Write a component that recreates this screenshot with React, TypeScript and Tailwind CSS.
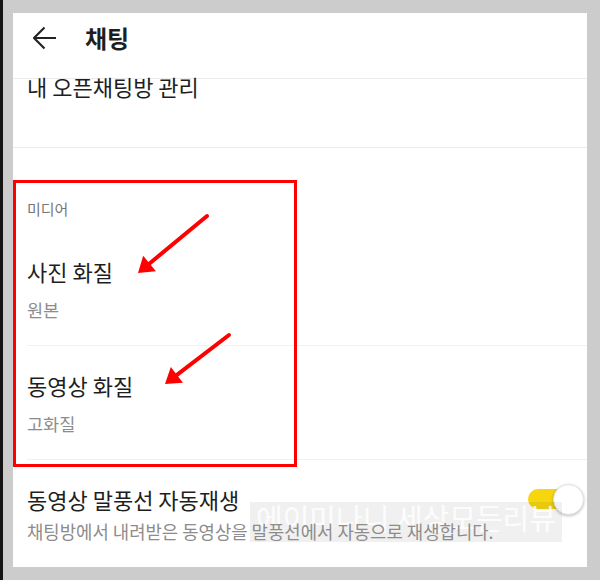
import React from "react";

// --- Annotation arrow (red, drawn over the screenshot) ---
type Pt = [number, number];

function arrowParts(tail: Pt, tip: Pt, head = 15, half = 10) {
  const dx = tip[0] - tail[0];
  const dy = tip[1] - tail[1];
  const len = Math.hypot(dx, dy);
  const ux = dx / len;
  const uy = dy / len;
  const bx = tip[0] - ux * head;
  const by = tip[1] - uy * head;
  const px = -uy;
  const py = ux;
  const poly = `${tip[0]},${tip[1]} ${bx + px * half},${by + py * half} ${bx - px * half},${by - py * half}`;
  return { bx: bx + ux * 2, by: by + uy * 2, poly };
}

function Arrow({ tail, tip }: { tail: Pt; tip: Pt }) {
  const a = arrowParts(tail, tip);
  return (
    <g>
      <line x1={tail[0]} y1={tail[1]} x2={a.bx} y2={a.by} stroke="#ff0000" strokeWidth={4} strokeLinecap="round" />
      <polygon points={a.poly} fill="#ff0000" />
    </g>
  );
}

function Toggle() {
  return (
    <div className="relative w-[56px] h-[31px] shrink-0">
      <div className="absolute left-0 top-[5px] w-[46px] h-[20px] rounded-full bg-[#f6d60f]" />
      <div className="absolute right-0 top-0 w-[31px] h-[31px] rounded-full bg-white border border-[#e2e2e2] shadow-[0_1px_3px_rgba(0,0,0,0.25)]" />
    </div>
  );
}

interface QualityItem {
  title: string;
  value: string;
}

const ITEMS: QualityItem[] = [
  { title: "사진 화질", value: "원본" },
  { title: "동영상 화질", value: "고화질" },
];

export default function App() {
  return (
    <div className="relative w-[600px] h-[580px] overflow-hidden bg-[#cccccc] font-['Noto_Sans_CJK_KR','Noto_Sans',sans-serif] flex">
      <div className="w-[3px] h-full bg-[#141414]" />

      <div className="ml-[10px] mt-[13px] w-[574px] h-[554px] bg-white flex flex-col">
        {/* header */}
        <div className="h-[66px] border-b border-[#ececec] shrink-0">
          <div className="h-[50px] flex items-center pl-[20px]">
            <svg width="24" height="24" viewBox="0 0 24 24" className="shrink-0">
              <path d="M23 12H1.5M11.5 1.5L1 12l10.5 10.5" fill="none" stroke="#222" strokeWidth={2.1} />
            </svg>
            <span className="ml-[28px] text-[24px] leading-[28px] font-bold text-[#1e1e1e]">채팅</span>
          </div>
        </div>

        {/* open chat row (scrolled under header) */}
        <div className="h-[69px] border-b border-[#ececec] px-[14px] shrink-0">
          <div className="-mt-[5px] text-[22px] leading-[24px] text-[#1e1e1e]">내 오픈채팅방 관리</div>
        </div>

        {/* media section */}
        <div className="pt-[51px] text-[15px] leading-[20px] text-[#777777] px-[14px]">미디어</div>
        <div className="h-[13px]" />
        {ITEMS.map((it) => (
          <div key={it.title} className="ml-[14px] border-b border-[#f1f1f1] pt-[25px] pb-[24px]">
            <div className="text-[22px] leading-[28px] text-[#1e1e1e]">{it.title}</div>
            <div className="mt-[14px] text-[17.5px] leading-[22px] text-[#8c8c8c]">{it.value}</div>
          </div>
        ))}

        {/* autoplay */}
        <div className="pl-[14px] pr-[3px] pt-[25px] flex items-start justify-between">
          <div>
            <div className="text-[22px] leading-[28px] text-[#1e1e1e]">동영상 말풍선 자동재생</div>
            <div className="relative z-10 mt-[7px] text-[17.8px] leading-[22px] text-[#8c8c8c] whitespace-nowrap">
              채팅방에서 내려받은 동영상을 말풍선에서 자동으로 재생합니다.
            </div>
          </div>
          <div className="-mt-[1px]">
            <Toggle />
          </div>
        </div>
      </div>

      {/* watermark */}
      <div className="absolute left-[250px] top-[502px] w-[312px] h-[40px] bg-black/[0.06] flex justify-center">
        <span className="-mt-[5px] text-[29px] leading-[40px] text-white/80 whitespace-nowrap">에이미나니 세상모든리뷰</span>
      </div>

      {/* red highlight box */}
      <div className="absolute left-[13px] top-[180px] w-[284px] h-[287px] border-[3px] border-[#ff0000]" />

      {/* red arrows */}
      <svg className="absolute inset-0 pointer-events-none" width="600" height="580">
        <Arrow tail={[207, 216]} tip={[138, 273]} />
        <Arrow tail={[229, 335]} tip={[165, 384]} />
      </svg>
    </div>
  );
}
